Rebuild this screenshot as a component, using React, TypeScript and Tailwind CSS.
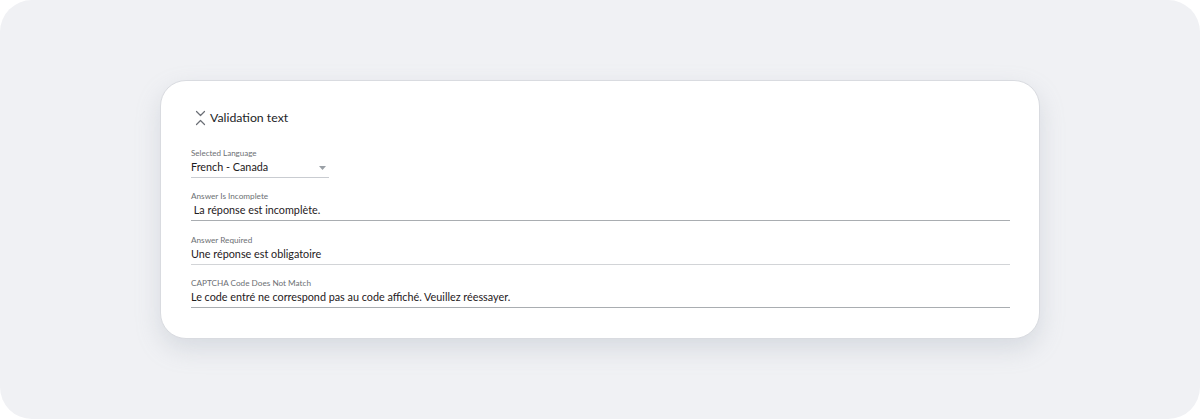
import React from 'react'

const fields = [
    { label: 'Answer Is Incomplete', value: '\u00a0La réponse est incomplète.', line: 'border-[#a9adb1]', gap: 'mt-[13px]' },
    { label: 'Answer Required', value: 'Une réponse est obligatoire', line: 'border-[#d2d4d7]', gap: 'mt-[14px]' },
    { label: 'CAPTCHA Code Does Not Match', value: 'Le code entré ne correspond pas au code affiché. Veuillez réessayer.', line: 'border-[#a9adb1]', gap: 'mt-[13px]' },
]

function CollapseIcon() {
    return (
        <svg width="11" height="16" viewBox="0 0 11 16" fill="none" stroke="#6b6f76" strokeWidth="1.2" strokeLinecap="round" strokeLinejoin="round">
            <path d="M1.5 1.5 5.5 5.5 9.5 1.5" />
            <path d="M1.5 14.5 5.5 10.5 9.5 14.5" />
        </svg>
    )
}

export default function App() {
    return (
        <div className="w-[1200px] h-[420px] bg-white" style={{ fontFamily: 'Lato, "Noto Sans", sans-serif' }}>
            <div className="h-[419px] rounded-[32px] bg-[#f0f1f4] pt-[80px] pl-[160px]">
                <div className="w-[880px] h-[259px] bg-white rounded-[26px] border border-[#d9dbe0] shadow-[0_10px_24px_rgba(150,160,175,0.28)] pl-[30px] pr-[29px] pt-[27px]">
                    <div className="flex items-center gap-[4px] pl-[4px] h-[20px]">
                        <CollapseIcon />
                        <span className="text-[12.3px] text-[#222426] leading-none">Validation text</span>
                    </div>

                    <div className="mt-[20px] w-[138px]">
                        <div className="text-[8px] leading-[10px] text-[#6d7074]">Selected Language</div>
                        <div className="flex items-center justify-between h-[20px] border-b border-[#c9ccd1]">
                            <span className="text-[10.8px] text-[#1e2022] leading-none">French - Canada</span>
                            <svg width="7" height="4" viewBox="0 0 7 4" className="mr-[3px]">
                                <path d="M0 0h7L3.5 4z" fill="#9aa0a6" />
                            </svg>
                        </div>
                    </div>

                    {fields.map(f => (
                        <div key={f.label} className={f.gap}>
                            <div className="text-[8.2px] leading-[10px] text-[#6d7074]">{f.label}</div>
                            <div className={`flex items-center h-[20px] border-b ${f.line}`}>
                                <span className="text-[10.8px] text-[#1e2022] leading-none">{f.value}</span>
                            </div>
                        </div>
                    ))}
                </div>
            </div>
        </div>
    )
}
